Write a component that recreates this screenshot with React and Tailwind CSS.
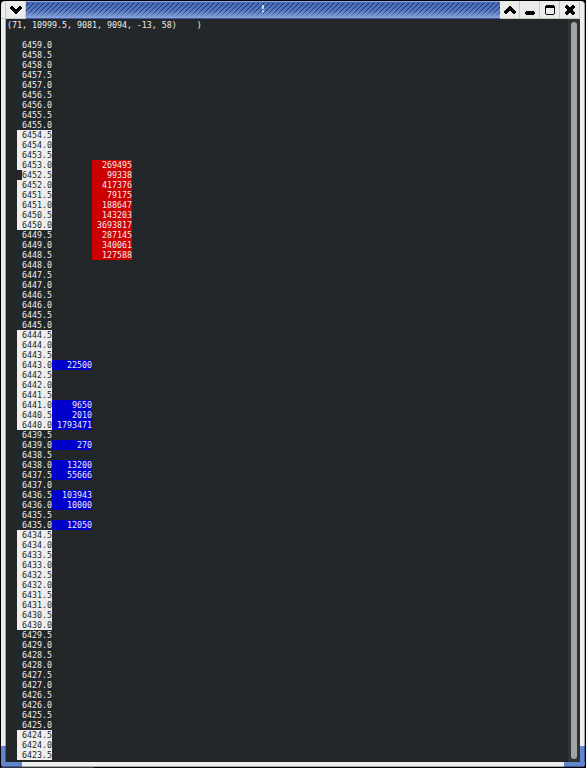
const WHITE_BANDS = [[6454.5, 6450], [6444.5, 6440], [6434.5, 6430], [6424.5, 6423.5]];

const ASKS = {
  '6453.0': 269495, '6452.5': 99338, '6452.0': 417376, '6451.5': 79175, '6451.0': 188647,
  '6450.5': 143203, '6450.0': 3693817, '6449.5': 287145, '6449.0': 340061, '6448.5': 127588,
};

const BIDS = {
  '6443.0': 22500, '6441.0': 9650, '6440.5': 2010, '6440.0': 1793471, '6439.0': 270,
  '6438.0': 13200, '6437.5': 55666, '6436.5': 103943, '6436.0': 10000, '6435.0': 12050,
};

const PRICES = Array.from({ length: 72 }, (_, i) => 6459 - i * 0.5);

function Row({ price }) {
  const key = price.toFixed(1);
  const light = WHITE_BANDS.some(([hi, lo]) => price <= hi && price >= lo);
  const cursor = key === '6452.5';
  return (
    <div className="flex h-[10px] pl-[11px]">
      <div className={light && !cursor ? 'w-[5px] bg-[#eeeeec]' : 'w-[5px]'} />
      <div className={light ? 'w-[30px] bg-[#eeeeec] text-right text-[#232729]' : 'w-[30px] text-right'}>{key}</div>
      <div className={BIDS[key] ? 'w-[40px] bg-[#0000cc] text-right' : 'w-[40px]'}>{BIDS[key]}</div>
      <div className={ASKS[key] ? 'w-[40px] bg-[#cc0000] text-right' : 'w-[40px]'}>{ASKS[key]}</div>
    </div>
  );
}

function TitleButton({ children }) {
  return (
    <div className="h-[18px] w-[20px] border-r border-b border-[#c8c8c4] bg-[#ebebe9]">
      <svg width="19" height="17" viewBox="0 0 19 17" fill="#000" shapeRendering="crispEdges">
        {children}
      </svg>
    </div>
  );
}

function TitleBar() {
  return (
    <div className="flex h-[18px] w-full">
      <div className="w-[5px] rounded-tl-[4px] border-r border-b border-[#c8c8c4] bg-[#eeeeec]" />
      <TitleButton>
        <path d="M5 5h2v1h1v1h1v1h2v-1h1v-1h1v-1h2v1h1v2h-1v1h-1v1h-1v1h-1v1h-1v1h-2v-1h-1v-1h-1v-1h-1v-1h-1v-1h-1v-2h1z" />
      </TitleButton>
      <div className="relative flex-1">
        <svg className="block h-[18px] w-full">
          <defs>
            <linearGradient id="bar" x1="0" y1="0" x2="0" y2="1">
              <stop offset="0" stopColor="#4468b4" />
              <stop offset="0.500" stopColor="#5678c0" />
              <stop offset="1" stopColor="#92aade" />
            </linearGradient>
            <linearGradient id="fade" x1="0" y1="0" x2="0" y2="1">
              <stop offset="0" stopColor="#fff" />
              <stop offset="0.550" stopColor="#ddd" />
              <stop offset="1" stopColor="#000" />
            </linearGradient>
            <pattern id="hatch" width="5" height="5" patternUnits="userSpaceOnUse">
              <path d="M0 4h1v1h-1zM1 3h1v1h-1zM2 2h1v1h-1zM3 1h1v1h-1zM4 0h1v1h-1z" fill="#172c62" />
            </pattern>
            <mask id="m"><rect y="2" width="100%" height="14" fill="url(#fade)" /></mask>
          </defs>
          <rect width="100%" height="18" fill="url(#bar)" />
          <rect y="2" width="100%" height="14" fill="url(#hatch)" mask="url(#m)" />
          <rect width="100%" height="1" fill="#91a8dc" />
          <rect y="17" width="100%" height="1" fill="#3c58a0" />
        </svg>
        <div className="absolute top-[2px] left-[235px] font-['DejaVu_Sans'] text-[8px] leading-[14px] font-bold text-white">!</div>
      </div>
      <TitleButton>
        <path d="M9 5h2v1h1v1h1v1h1v1h1v1h1v2h-1v1h-2v-1h-1v-1h-1v-1h-2v1h-1v1h-1v1h-2v-1h-1v-2h1v-1h1v-1h1v-1h1v-1h1z" />
      </TitleButton>
      <TitleButton>
        <path d="M6 10h8v1h1v2h-1v1h-8v-1h-1v-2h1z" />
      </TitleButton>
      <TitleButton>
        <path d="M6 4h8v1h1v8h-1v1h-8v-1h-1v-8h1zM6 7v6h8v-6z" fillRule="evenodd" />
      </TitleButton>
      <TitleButton>
        <path d="M6 4h2v1h1v1h2v-1h1v-1h2v1h1v2h-1v1h-1v2h1v1h1v2h-1v1h-2v-1h-1v-1h-2v1h-1v1h-2v-1h-1v-2h1v-1h1v-2h-1v-1h-1v-2h1z" />
      </TitleButton>
      <div className="w-[5px] rounded-tr-[4px] border-r border-[#a6a6a2] bg-[#eeeeec]" />
    </div>
  );
}

export default function App() {
  return (
    <div className="flex h-[768px] w-[586px] flex-col overflow-hidden bg-black px-px pt-px font-['DejaVu_Sans_Mono',monospace] text-[8.300px] leading-[10px] whitespace-pre text-[#eeeeec]">
      <TitleBar />
      <div className="flex h-[743px]">
        <div className="flex w-[5px] flex-col">
          <div className="flex-1 border-r border-[#a6a6a2] bg-[#eeeeec]" />
          <div className="h-[16px] border-r border-[#3c58a0] bg-[#6484cc]" />
        </div>
        <div className="flex-1 bg-[#232729] pt-px">
          <div className="h-[20px] pl-px">(71, 10999.5, 9081, 9094, -13, 58)    )</div>
          {PRICES.map((p) => <Row key={p} price={p} />)}
        </div>
        <div className="w-[12px] bg-[#2e3436] pt-[3px] pl-[3px]">
          <div className="h-[737px] w-[6px] rounded-full bg-[#a0a4a2]" />
        </div>
        <div className="flex w-[5px] flex-col">
          <div className="flex-1 border-r border-[#a6a6a2] bg-[#eeeeec]" />
          <div className="h-[16px] border-r border-[#3c58a0] bg-[#6484cc]" />
        </div>
      </div>
      <div className="flex h-[5px] overflow-hidden rounded-b-[3px]">
        <div className="w-[21px] border-b border-[#3c58a0] bg-[#6484cc]" />
        <div className="flex-1 border-b border-[#a6a6a2] bg-[#eeeeec]" />
        <div className="w-[21px] border-b border-[#3c58a0] bg-[#6484cc]" />
      </div>
      <div className="h-px w-[93px] bg-[#2e3436]" />
    </div>
  );
}
